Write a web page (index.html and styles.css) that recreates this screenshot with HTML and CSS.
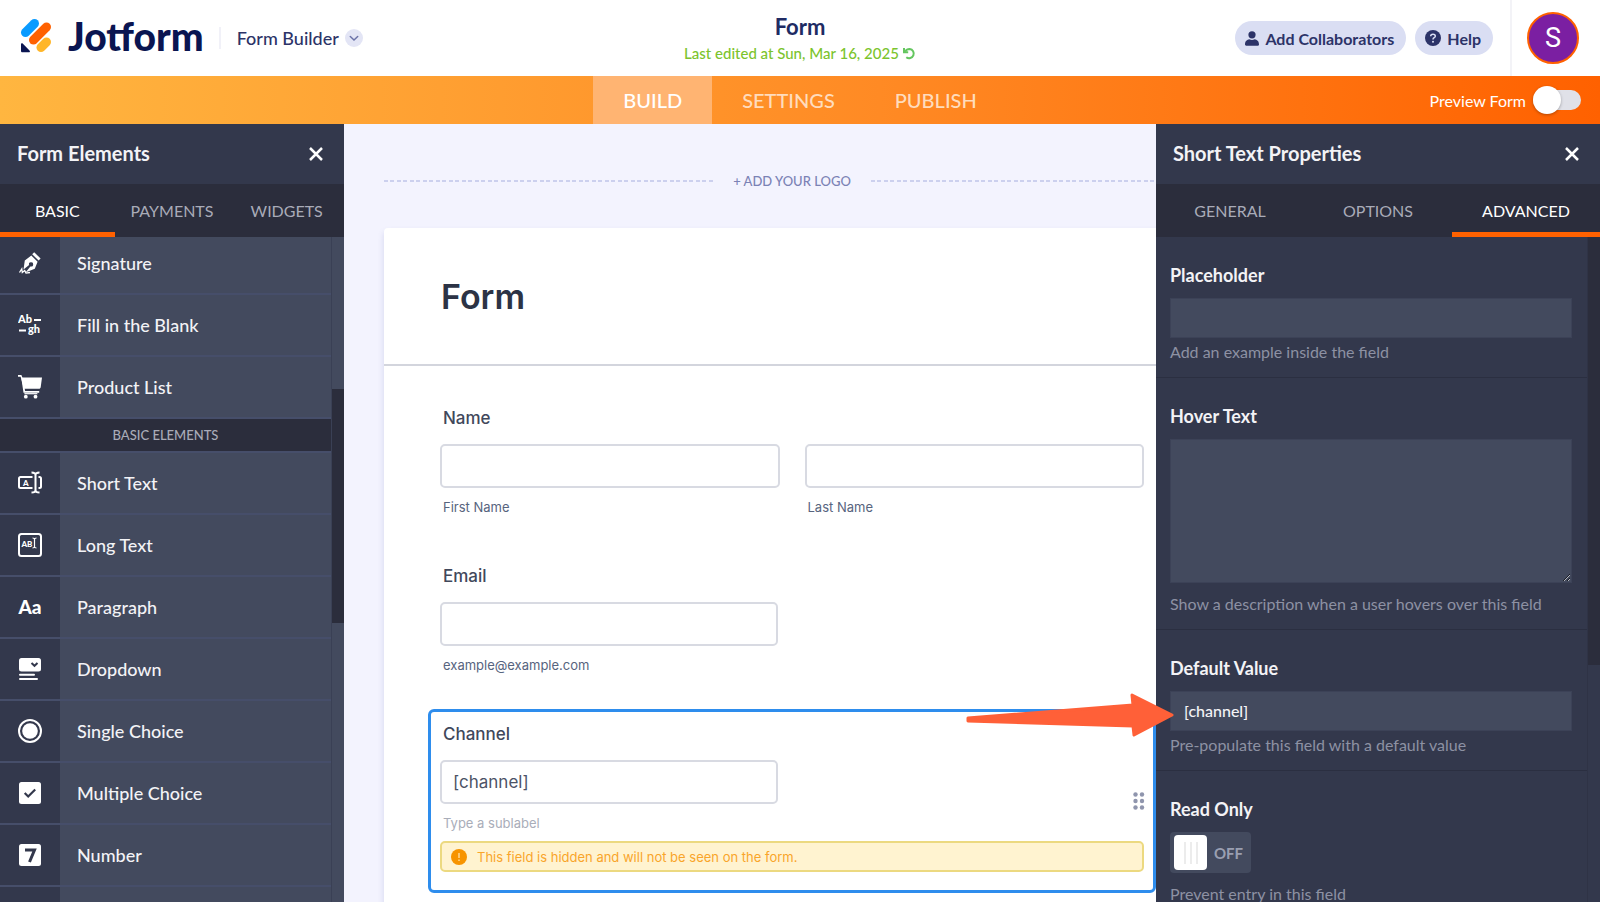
FILE: index.html
```
<!DOCTYPE html>
<html lang="en">
<head>
	<meta charset="utf-8">
	<title>Form | Form Builder</title>
	<meta name="viewport" content="width=device-width, initial-scale=1">
	<link rel="stylesheet" href="styles.css">
</head>
<body>

	<header class="topbar">
		<div class="brand">
			<a href="#" class="logo">
				<svg width="32" height="36" viewBox="0 0 32 36" aria-hidden="true">
					<g fill="none" stroke-width="9" stroke-linecap="round">
						<path stroke="#0a9bff" d="M5.500 14.500L14.500 5.500"/>
						<path stroke="#ff6100" d="M13.500 22L26.500 9"/>
						<path stroke="#ffb629" d="M21 29.500L26.500 24"/>
					</g>
					<path fill="#0a1551" d="M1 26.500c0-1.300 1-1.600 1.900-.8l6.600 6.700c.9.900.5 1.900-.8 1.900H2.400c-.8 0-1.400-.6-1.400-1.400z"/>
				</svg>
				<span>Jotform</span>
			</a>
			<button type="button" class="product">Form Builder
				<svg width="18" height="18" viewBox="0 0 18 18" aria-hidden="true">
					<circle cx="9" cy="9" r="9" fill="#e3e5f5"/>
					<path d="M5.300 7.500L9 11l3.700-3.500" fill="none" stroke="#6c73a8" stroke-width="1.500" stroke-linecap="round"/>
				</svg>
			</button>
		</div>

		<div class="form-info">
			<h1>Form</h1>
			<a href="#">Last edited at Sun, Mar 16, 2025
				<svg width="13" height="13" viewBox="0 0 13 13" aria-hidden="true">
					<path d="M1 1v4.200h4.200" fill="none" stroke="#64c65f" stroke-width="2"/>
					<path d="M2 4.600C3 3 4.500 2 6.700 2a4.600 4.600 0 1 1-3.400 8.200" fill="none" stroke="#64c65f" stroke-width="2"/>
				</svg>
			</a>
		</div>

		<div class="account">
			<button type="button" class="pill">
				<svg width="14" height="15" viewBox="0 0 14 15" aria-hidden="true">
					<circle cx="7" cy="3.800" r="3.600" fill="#2c3368"/>
					<path fill="#2c3368" d="M0 13.500C0 10 2.200 8.700 4.300 8.300c1.700 1 3.700 1 5.400 0C11.800 8.700 14 10 14 13.500c0 .8-.5 1.200-1.200 1.200H1.200C.5 14.700 0 14.300 0 13.500z"/>
				</svg>
				Add Collaborators
			</button>
			<button type="button" class="pill">
				<svg width="16" height="16" viewBox="0 0 16 16" aria-hidden="true">
					<circle cx="8" cy="8" r="8" fill="#2c3368"/>
					<path d="M5.700 6.300C5.700 4.900 6.700 4.200 8 4.200s2.300.8 2.300 2c0 1.500-2.300 1.500-2.300 3.200" fill="none" stroke="#dadef3" stroke-width="1.500"/>
					<circle cx="8" cy="11.700" r="1" fill="#dadef3"/>
				</svg>
				Help
			</button>
			<div class="avatar-wrap"><button type="button" class="avatar">S</button></div>
		</div>
	</header>

	<nav class="steps">
		<div class="step-links">
			<a href="#" class="active">BUILD</a>
			<a href="#">SETTINGS</a>
			<a href="#">PUBLISH</a>
		</div>
		<label class="preview">Preview Form <input type="checkbox"></label>
	</nav>

	<div class="workspace">

		<aside class="panel elements">
			<div class="panel-head">
				<h2>Form Elements</h2>
				<button type="button" class="close" aria-label="Close form elements">
					<svg width="14" height="14" viewBox="0 0 14 14"><path d="M1 1l12 12M13 1L1 13" stroke="#fff" stroke-width="2.500"/></svg>
				</button>
			</div>
			<div class="tabs">
				<button type="button" class="active">BASIC</button>
				<button type="button">PAYMENTS</button>
				<button type="button">WIDGETS</button>
			</div>
			<div class="panel-body">
				<div class="list">
					<button type="button" class="item">
						<span class="icon"><svg width="24" height="24" viewBox="0 0 24 24">
							<path fill="#fff" d="M16.200 1.200l6.400 6.400-2 2-6.400-6.400z"/>
							<path fill="#fff" fill-rule="evenodd" d="M13.300 4.400l6.300 6.300-2.800 7-9.300 3.800 4.900-6.100a2.100 2.100 0 1 0-1.300-1.300L5.500 18.600l1.300-9.200z"/>
							<path d="M1.500 21.500l2.300-3.700.5 3.700 2.400-2 1.300 2.600 4-.6" fill="none" stroke="#fff" stroke-width="1.300"/>
						</svg></span>
						<span class="name">Signature</span>
					</button>
					<button type="button" class="item">
						<span class="icon"><svg width="24" height="24" viewBox="0 0 24 24">
							<text x="0" y="10" class="glyph small">Ab</text>
							<path d="M16 7h7M1 17.500h7" stroke="#fff" stroke-width="2"/>
							<text x="10" y="20" class="glyph small">gh</text>
						</svg></span>
						<span class="name">Fill in the Blank</span>
					</button>
					<button type="button" class="item">
						<span class="icon"><svg width="24" height="24" viewBox="0 0 24 24">
							<path fill="#fff" d="M0 0h3.400l1 2.500H24l-1.300 9.800c-.1.900-.8 1.500-1.700 1.500H6L3.100 3.200 2.500 1.700H0z"/>
							<path d="M4.200 3l2.100 13.800h14.900" fill="none" stroke="#fff" stroke-width="1.800"/>
							<circle cx="7.800" cy="21.700" r="1.900" fill="#fff"/><circle cx="17.500" cy="21.700" r="1.900" fill="#fff"/>
							<path d="M6.400 18.700h13" stroke="#fff" stroke-width="1.200"/>
						</svg></span>
						<span class="name">Product List</span>
					</button>
					<h3>BASIC ELEMENTS</h3>
					<button type="button" class="item">
						<span class="icon"><svg width="24" height="24" viewBox="0 0 24 24">
							<path d="M14.500 6H2.500C1.600 6 1 6.600 1 7.500v8c0 .9.600 1.500 1.500 1.500h12M20.500 6h1c.9 0 1.500.600 1.500 1.500v8c0 .9-.6 1.500-1.500 1.500h-1" fill="none" stroke="#fff" stroke-width="2"/>
							<path d="M13.500 1.500c2 0 4 .500 4 2.500v15c0 2-2 2.500-4 2.500M21.500 1.500c-2 0-4 .500-4 2.500v15c0 2 2 2.500 4 2.500" fill="none" stroke="#fff" stroke-width="2"/>
							<text x="5" y="14.500" class="glyph tiny">A</text>
						</svg></span>
						<span class="name">Short Text</span>
					</button>
					<button type="button" class="item">
						<span class="icon"><svg width="24" height="24" viewBox="0 0 24 24">
							<rect x="1" y="1" width="22" height="22" rx="2.500" fill="none" stroke="#fff" stroke-width="2"/>
							<text x="3.500" y="14" class="glyph tiny">AB</text>
							<path d="M14.500 5c1.300 0 2 .400 2 1.200v7.600c0 .8-.7 1.200-2 1.200M18.500 5c-1.300 0-2 .400-2 1.200v7.600c0 .8.700 1.200 2 1.200" fill="none" stroke="#fff" stroke-width="1.200"/>
						</svg></span>
						<span class="name">Long Text</span>
					</button>
					<button type="button" class="item">
						<span class="icon"><svg width="24" height="24" viewBox="0 0 24 24"><text x="12" y="18.500" text-anchor="middle" class="glyph large">Aa</text></svg></span>
						<span class="name">Paragraph</span>
					</button>
					<button type="button" class="item">
						<span class="icon"><svg width="24" height="24" viewBox="0 0 24 24">
							<rect x="1" y="1" width="22" height="13.500" rx="2.500" fill="#fff"/>
							<path d="M13.500 6l3 2.800 3-2.800" fill="none" stroke="#33384c" stroke-width="2"/>
							<path d="M2 17.800h14M2 22h17" stroke="#fff" stroke-width="2" stroke-linecap="round"/>
						</svg></span>
						<span class="name">Dropdown</span>
					</button>
					<button type="button" class="item">
						<span class="icon"><svg width="24" height="24" viewBox="0 0 24 24">
							<circle cx="12" cy="12" r="11" fill="none" stroke="#fff" stroke-width="2"/>
							<circle cx="12" cy="12" r="7.800" fill="#fff"/>
						</svg></span>
						<span class="name">Single Choice</span>
					</button>
					<button type="button" class="item">
						<span class="icon"><svg width="24" height="24" viewBox="0 0 24 24">
							<rect x="1" y="1" width="22" height="22" rx="2.500" fill="#fff"/>
							<path d="M6.700 12l3.500 3.500 7-7" fill="none" stroke="#33384c" stroke-width="2.200"/>
						</svg></span>
						<span class="name">Multiple Choice</span>
					</button>
					<button type="button" class="item">
						<span class="icon"><svg width="24" height="24" viewBox="0 0 24 24">
							<rect x="1" y="1" width="22" height="22" rx="2.500" fill="#fff"/>
							<path d="M7 7h9.500l-5 12" fill="none" stroke="#33384c" stroke-width="3"/>
						</svg></span>
						<span class="name">Number</span>
					</button>
					<button type="button" class="item"><span class="icon"></span><span class="name"></span></button>
				</div>
				<div class="scrollbar"><div class="thumb"></div></div>
			</div>
		</aside>

		<main class="canvas">
			<div class="stage">
				<button type="button" class="add-logo"><span>+ ADD YOUR LOGO</span></button>
				<form class="card">
					<div class="card-head"><h2>Form</h2></div>
					<div class="questions">
						<fieldset class="question">
							<legend>Name</legend>
							<div class="pair">
								<div>
									<input type="text" id="first">
									<label class="sub" for="first">First Name</label>
								</div>
								<div>
									<input type="text" id="last">
									<label class="sub" for="last">Last Name</label>
								</div>
							</div>
						</fieldset>
						<div class="question">
							<label class="title" for="email">Email</label>
							<input type="text" id="email" class="half">
							<span class="sub">example@example.com</span>
						</div>
						<div class="question selected">
							<label class="title" for="channel">Channel</label>
							<input type="text" id="channel" class="half" value="[channel]">
							<span class="sub faded">Type a sublabel</span>
							<p class="notice">
								<svg width="16" height="16" viewBox="0 0 16 16" aria-hidden="true">
									<circle cx="8" cy="8" r="8" fill="#f79400"/>
									<path d="M8 4v5M8 10.500v1.600" stroke="#ffd48a" stroke-width="1.600"/>
								</svg>
								This field is hidden and will not be seen on the form.
							</p>
							<svg class="drag" width="12" height="18" viewBox="0 0 12 18" fill="#8f95ad" aria-hidden="true">
								<circle cx="2.500" cy="2.500" r="2.200"/><circle cx="9" cy="2.500" r="2.200"/>
								<circle cx="2.500" cy="9" r="2.200"/><circle cx="9" cy="9" r="2.200"/>
								<circle cx="2.500" cy="15.500" r="2.200"/><circle cx="9" cy="15.500" r="2.200"/>
							</svg>
						</div>
					</div>
				</form>
			</div>
		</main>

		<aside class="panel properties">
			<div class="panel-head">
				<h2>Short Text Properties</h2>
				<button type="button" class="close" aria-label="Close properties">
					<svg width="14" height="14" viewBox="0 0 14 14"><path d="M1 1l12 12M13 1L1 13" stroke="#fff" stroke-width="2.500"/></svg>
				</button>
			</div>
			<div class="tabs">
				<button type="button">GENERAL</button>
				<button type="button">OPTIONS</button>
				<button type="button" class="active">ADVANCED</button>
			</div>
			<div class="panel-body">
				<div class="settings">
					<div class="setting">
						<label for="placeholder">Placeholder</label>
						<input type="text" id="placeholder">
						<p>Add an example inside the field</p>
					</div>
					<div class="setting roomy">
						<label for="hover">Hover Text</label>
						<textarea id="hover"></textarea>
						<p>Show a description when a user hovers over this field</p>
					</div>
					<div class="setting">
						<label for="default">Default Value</label>
						<input type="text" id="default" value="[channel]">
						<p>Pre-populate this field with a default value</p>
					</div>
					<div class="setting roomy">
						<label for="readonly">Read Only</label>
						<div class="switch"><input type="checkbox" id="readonly"><span>OFF</span></div>
						<p>Prevent entry in this field</p>
					</div>
				</div>
				<div class="scrollbar"><div class="thumb"></div></div>
			</div>
			<svg class="arrow" width="210" height="46" viewBox="0 0 210 46" aria-hidden="true">
				<path d="M3 27L168 14 167 4 207 24 169 44 168 35 3 30z" fill="#ff6038" stroke="#ff6038" stroke-width="3" stroke-linejoin="round"/>
			</svg>
		</aside>

	</div>
</body>
</html>
```
FILE: styles.css
```
* {
	box-sizing: border-box;
}

body {
	margin: 0;
	height: 100vh;
	display: flex;
	flex-direction: column;
	overflow: hidden;
	font-family: Lato, "Open Sans", sans-serif;
	font-weight: 500;
	background: #f3f3fe;
}

h1, h2, h3, p {
	margin: 0;
}

button, input, textarea {
	font: inherit;
	color: inherit;
	margin: 0;
}

button {
	background: none;
	border: 0;
	padding: 0;
	cursor: pointer;
}

a {
	text-decoration: none;
	color: inherit;
}

svg {
	flex: none;
}

/* top bar */
.topbar {
	display: grid;
	grid-template-columns: 1fr auto 1fr;
	height: 76px;
	flex: none;
	background: #fff;
	color: #0a1551;
}

.brand, .logo, .product, .account, .pill {
	display: flex;
	align-items: center;
}

.brand {
	padding-left: 20px;
}

.logo {
	gap: 16px;
	padding-bottom: 4px;
	font-size: 39px;
	line-height: 40px;
	font-weight: 900;
}

.product {
	gap: 6px;
	height: 22px;
	margin-left: 15px;
	padding-left: 16px;
	border-left: 2px solid #f1f1f8;
	font-size: 18px;
	color: #2c3368;
}

.form-info {
	text-align: center;
	padding-top: 14px;
}

.form-info h1 {
	font-size: 22px;
	line-height: 26px;
	font-weight: 700;
	color: #202b63;
}

.form-info a {
	display: flex;
	align-items: center;
	gap: 4px;
	font-size: 15px;
	line-height: 26px;
	color: #7cc42d;
}

.account {
	justify-content: flex-end;
}

.pill {
	height: 34px;
	margin-right: 9px;
	padding: 0 12px 0 10px;
	gap: 6px;
	border-radius: 17px;
	background: #dadef3;
	color: #2c3368;
	font-size: 16px;
	font-weight: 700;
}

.avatar-wrap {
	display: flex;
	align-items: center;
	height: 100%;
	margin-left: 8px;
	padding: 0 21px 0 15px;
	border-left: 2px solid #f3f3f7;
}

.avatar {
	width: 52px;
	height: 52px;
	border: 2px solid #ff6100;
	border-radius: 50%;
	background: #7b1fa2;
	color: #fff;
	font-family: Roboto, sans-serif;
	font-size: 27px;
	font-weight: 400;
}

/* build / settings / publish */
.steps {
	display: grid;
	grid-template-columns: 1fr auto 1fr;
	height: 48px;
	flex: none;
	background: linear-gradient(90deg, #ffb640, #ff8a24 55%, #ff6100);
	color: #fff;
}

.step-links {
	grid-column: 2;
	display: flex;
}

.step-links a {
	padding: 0 30px;
	font-size: 20px;
	line-height: 48px;
	color: #ffdcbd;
}

.step-links .active {
	background: #ffb472;
	color: #fff;
}

.preview {
	display: flex;
	align-items: center;
	justify-content: flex-end;
	gap: 7px;
	padding-right: 19px;
	font-size: 16px;
	font-weight: 400;
}

.preview input {
	appearance: none;
	display: flex;
	align-items: center;
	width: 48px;
	height: 20px;
	border-radius: 10px;
	background: #e0e1e8;
}

.preview input::before {
	content: "";
	width: 28px;
	height: 28px;
	border-radius: 50%;
	background: #fff;
	box-shadow: 0 1px 3px rgba(0, 0, 0, .3);
}

.workspace {
	display: flex;
	flex: 1;
	min-height: 0;
}

/* side panels */
.panel {
	display: flex;
	flex-direction: column;
	flex: none;
	background: #33384c;
	color: #f3f3f6;
}

.elements {
	width: 344px;
}

.properties {
	width: 444px;
	position: relative;
}

.panel-head {
	display: flex;
	align-items: center;
	justify-content: space-between;
	height: 60px;
	flex: none;
	padding: 0 21px 0 17px;
}

.panel-head h2 {
	font-size: 20px;
	line-height: 24px;
	font-weight: 700;
	padding-bottom: 2px;
}

.close {
	display: flex;
}

.tabs {
	display: flex;
	height: 53px;
	flex: none;
	background: #2b2d3c;
}

.tabs button {
	flex: 1;
	border-top: 4px solid transparent;
	border-bottom: 5px solid transparent;
	font-size: 16px;
	font-weight: 400;
	color: #a9abb8;
}

.tabs .active {
	color: #fff;
	border-bottom-color: #ff6100;
}

.panel-body {
	display: flex;
	flex: 1;
	min-height: 0;
	overflow: hidden;
}

.scrollbar {
	display: flex;
	flex-direction: column;
	width: 13px;
	flex: none;
}

.thumb {
	background: #2b2d3c;
}

.elements .scrollbar {
	background: #434a5e;
	border-left: 1px solid #3a4055;
}

.elements .thumb {
	height: 234px;
	margin-top: 152px;
}

.properties .scrollbar {
	border-left: 1px solid #2f3346;
}

.properties .thumb {
	height: 428px;
}

/* elements list, scrolled part way into the first row */
.list {
	flex: 1;
	margin-top: -4px;
}

.item {
	display: flex;
	width: 100%;
	height: 62px;
	border-bottom: 2px solid #464e6a;
	font-size: 18px;
	text-align: left;
}

.icon {
	display: flex;
	align-items: center;
	justify-content: center;
	width: 60px;
	height: 100%;
}

.name {
	display: flex;
	align-items: center;
	flex: 1;
	height: 100%;
	padding-left: 17px;
	background: #434a5e;
}

.list h3 {
	background: #2b2d3c;
	border-bottom: 2px solid #464e6a;
	font-size: 13px;
	line-height: 32px;
	font-weight: 500;
	text-align: center;
	color: #a9abb8;
}

.glyph {
	font-weight: 900;
	fill: #fff;
}

.tiny {
	font-size: 8px;
}

.small {
	font-size: 11px;
}

.large {
	font-size: 19px;
}

/* form canvas */
.canvas {
	flex: 1;
	min-width: 0;
	overflow: hidden;
	font-family: Inter, sans-serif;
	color: #2c3345;
}

/* runs on under the properties panel */
.stage {
	margin: 0 -44px 0 40px;
}

.add-logo {
	display: flex;
	align-items: center;
	gap: 20px;
	width: 100%;
	height: 104px;
	padding-top: 9px;
	font-family: Lato, sans-serif;
	font-size: 13px;
	color: #7b82b5;
}

.add-logo::before, .add-logo::after {
	content: "";
	flex: 1;
	height: 2px;
	background: repeating-linear-gradient(90deg, #ccd0ee 0 4px, transparent 4px 6px, #ccd0ee 6px 10px, transparent 10px 13px);
}

.card {
	background: #fff;
	border-radius: 4px;
	box-shadow: 0 4px 6px rgba(84, 95, 180, .2);
}

.card-head {
	padding: 47px 57px 46px;
	border-bottom: 2px solid #d3d5dd;
}

.card-head h2 {
	font-size: 34px;
	line-height: 43px;
	font-weight: 600;
}

.questions {
	padding: 27px 44px;
}

.question {
	margin: 0;
	min-width: 0;
	min-height: 158px;
	padding: 10px 9px 18px;
	border: 3px solid transparent;
	border-radius: 6px;
}

.question.selected {
	position: relative;
	border-color: #2e8ded;
}

.question legend, .question .title {
	display: block;
	float: left;
	width: 100%;
	margin-bottom: 14px;
	padding: 0 3px;
	font-size: 17px;
	line-height: 24px;
	font-weight: 500;
	color: #41485b;
}

.pair {
	display: grid;
	grid-template-columns: 1fr 1fr;
	gap: 25px;
	width: 100%;
}

.question input {
	display: block;
	width: 100%;
	height: 44px;
	padding: 0 11px;
	border: 2px solid #d8dae2;
	border-radius: 5px;
	background: #fff;
	font-size: 17px;
	font-weight: 400;
	color: #4c5366;
}

.question .half {
	width: 48%;
}

.sub {
	display: block;
	margin-top: 9px;
	padding-left: 3px;
	font-size: 13px;
	line-height: 20px;
	font-weight: 400;
	color: #57647e;
}

.faded {
	color: #a9adb9;
}

.notice {
	display: flex;
	align-items: center;
	gap: 10px;
	height: 31px;
	margin-top: 8px;
	padding-left: 9px;
	border: 2px solid #ecd980;
	border-radius: 5px;
	background: #fff3d0;
	font-size: 13px;
	font-weight: 400;
	color: #f9a52a;
}

.drag {
	position: absolute;
	top: 80px;
	right: 8px;
}

/* field settings */
.settings {
	flex: 1;
	min-width: 0;
}

.setting {
	padding: 28px 15px 15px 14px;
	border-bottom: 1px solid #2b2f41;
}

.setting label {
	display: block;
	margin-bottom: 13px;
	font-size: 18px;
	line-height: 20px;
	font-weight: 700;
}

.setting input[type=text], .setting textarea {
	display: block;
	width: 100%;
	height: 40px;
	padding: 0 13px 2px;
	border: 1px solid #3c4257;
	background: #434a5e;
	font-size: 16px;
}

.setting textarea {
	height: 144px;
	resize: vertical;
}

.setting p {
	margin-top: 4px;
	font-size: 16px;
	line-height: 20px;
	font-weight: 400;
	color: #8d91a3;
}

.setting.roomy p {
	margin-top: 11px;
}

.switch {
	display: flex;
	align-items: center;
	gap: 7px;
	width: max-content;
	height: 41px;
	padding: 3px 8px 3px 4px;
	border-radius: 4px;
	background: #434a5e;
	font-size: 15px;
	font-weight: 700;
	color: #9a9fb1;
}

.switch input {
	appearance: none;
	width: 33px;
	height: 35px;
	border-radius: 4px;
	background:
		repeating-linear-gradient(90deg, #ececec 0 2px, transparent 2px 6px) center / 14px 22px no-repeat,
		#fff;
}

/* pointer laid over the default value field */
.arrow {
	position: absolute;
	top: 567px;
	left: -191px;
}
```
